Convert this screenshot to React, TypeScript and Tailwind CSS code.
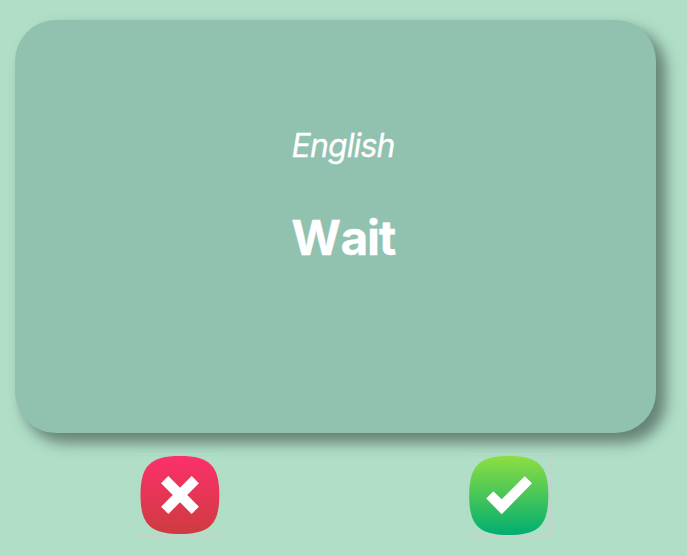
export default function App() {
  return (
    <main className="flex h-[556px] w-[687px] flex-col overflow-hidden bg-[#b0dec7] pt-5 font-['Inter','Liberation_Sans',sans-serif] text-white">
      <section className="ml-[15px] flex h-[413px] w-[641px] shrink-0 flex-col items-center rounded-[41px] bg-[#91c1af] pt-[106px] pl-[15px] shadow-[9px_9px_14px_1px_#668376]">
        <p className="text-[32px] leading-10 tracking-[-0.9px] italic [-webkit-text-stroke:0.3px_white]">English</p>
        <h1 className="mt-[42px] text-[48px] leading-[60px] font-bold [-webkit-text-stroke:0.3px_white]"><span className="tracking-[-0.4px]">W</span><span className="tracking-[-1.4px]">ait</span></h1>
      </section>
      <div className="mt-5 flex pl-[137px]">
        <button aria-label="Incorrect" className="h-[84px] w-[85px] border border-[#c8cfcb]">
          <svg width="83" height="82" viewBox="138 454 83 82">
            <defs><linearGradient id="red" x2="0" y2="1"><stop stopColor="#fd306b" /><stop offset="1" stopColor="#ce3b40" /></linearGradient></defs>
            <path fill="url(#red)" d="M180 456C210 456 219.300 466 219.300 495S210 534 180 534 140.500 524 140.500 495 150 456 180 456Z" />
            <path d="m164.700 479.700 30.600 30.600m0-30.600-30.600 30.600" stroke="white" strokeWidth="10.3" />
          </svg>
        </button>
        <button aria-label="Correct" className="ml-[245px] h-[84px] w-[84px] border border-[#c8cfcb]">
          <svg width="82" height="82" viewBox="468 454 82 82">
            <defs><linearGradient id="green" x2="0" y2="1"><stop stopColor="#8ede42" /><stop offset="1" stopColor="#00ae70" /></linearGradient></defs>
            <path fill="url(#green)" d="M508.700 456C539 456 548.300 466 548.300 495.500S539 535 508.700 535 469.200 525 469.200 495.500 479 456 508.700 456Z" />
            <path fill="white" d="m486.300 498.500 7-7.200 8.400 8 23-23 7.300 7-30.300 31Z" />
          </svg>
        </button>
      </div>
    </main>
  );
}
